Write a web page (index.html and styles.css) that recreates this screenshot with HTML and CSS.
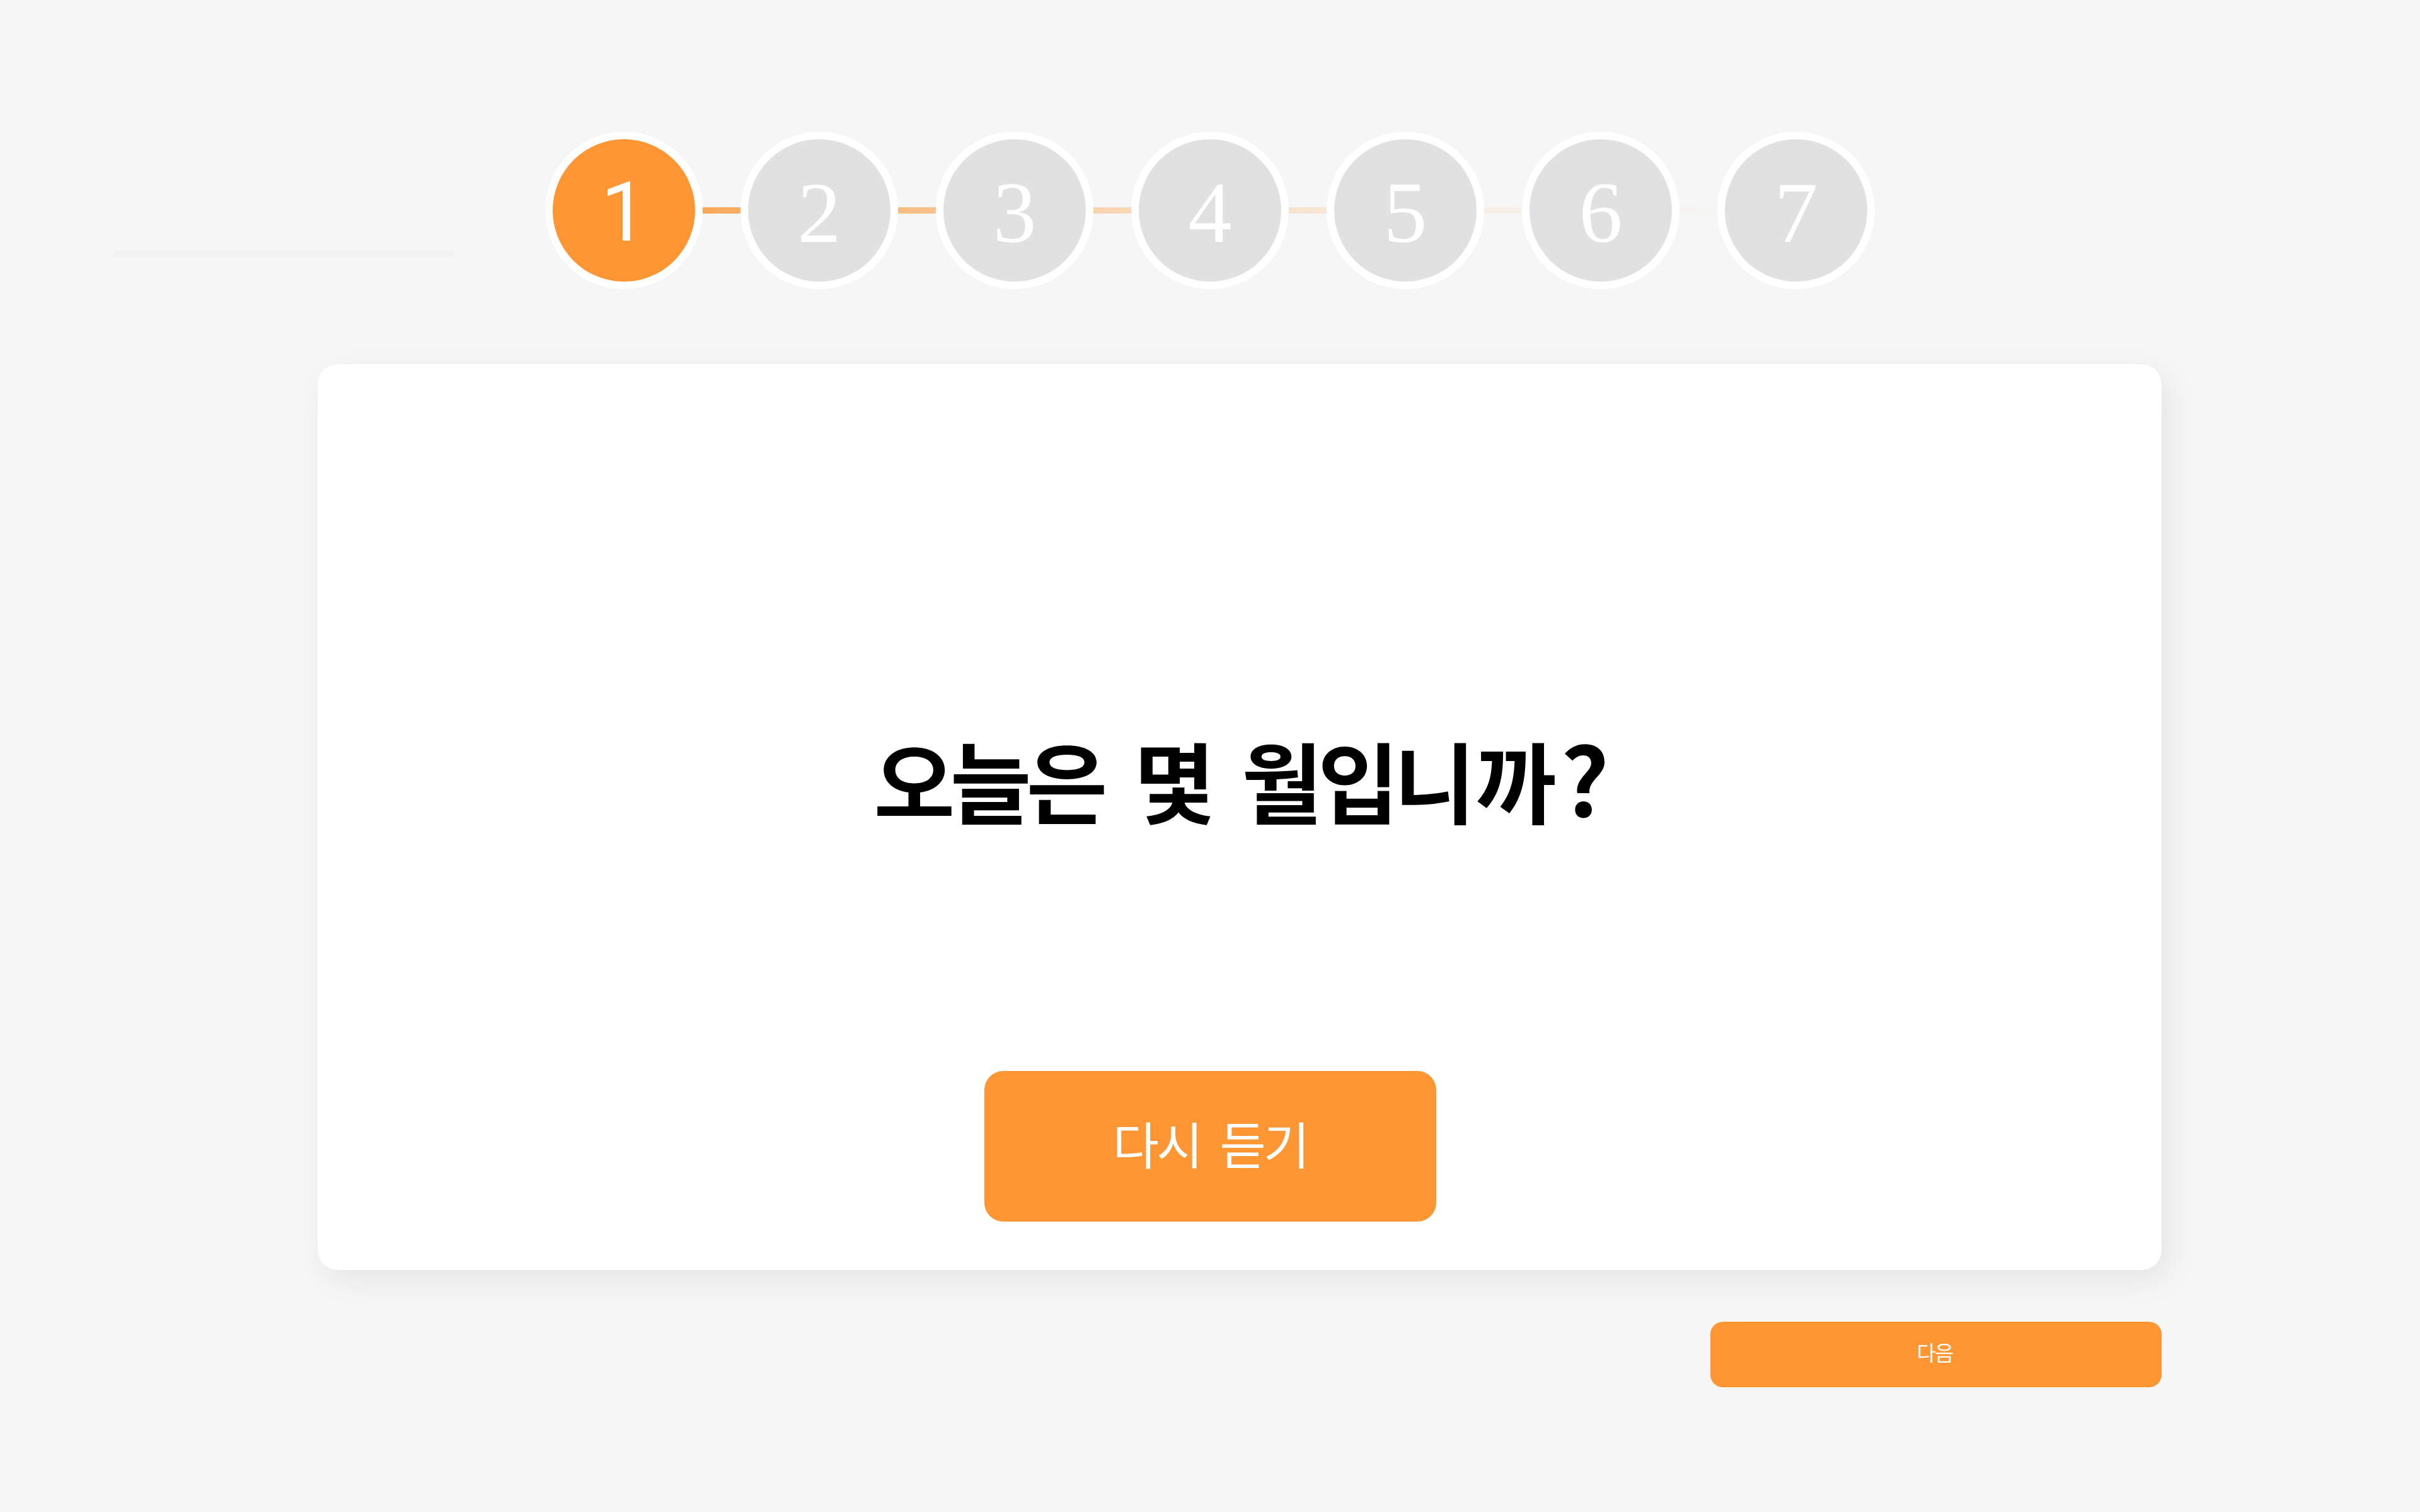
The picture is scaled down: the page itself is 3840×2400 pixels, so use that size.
FILE: index.html
```html
<!DOCTYPE html>
<html lang="ko">
<head>
<meta charset="utf-8">
<title>오늘은 몇 월입니까?</title>
<link rel="stylesheet" href="styles.css">
</head>
<body>
<header class="top">
  <div class="progress"></div>
  <div class="stepper">
    <div class="step active">1</div>
    <div class="link l1"></div>
    <div class="step">2</div>
    <div class="link l2"></div>
    <div class="step">3</div>
    <div class="link l3"></div>
    <div class="step">4</div>
    <div class="link l4"></div>
    <div class="step">5</div>
    <div class="link l5"></div>
    <div class="step">6</div>
    <div class="link l6"></div>
    <div class="step">7</div>
  </div>
</header>
<main class="main">
  <section class="card">
    <h1 class="question">오늘은 몇 월입니<span class="wide">까</span><span class="qmark">?</span></h1>
    <button class="replay" type="button">다시 듣기</button>
  </section>
  <button class="next" type="button">다음</button>
</main>
</body>
</html>
```

FILE: styles.css
```css
html, body {
  margin: 0;
  padding: 0;
}
body {
  background: #f6f6f6;
  width: 3840px;
  height: 2400px;
  font-family: "Noto Sans CJK KR", "Noto Sans", sans-serif;
  overflow: hidden;
}
.top {
  display: grid;
  grid-template-columns: 1fr auto 1fr;
  padding-top: 209px;
}
.progress {
  align-self: start;
  margin-top: 189px;
  margin-left: 179px;
  width: 541px;
  height: 10px;
  border-radius: 5px;
  background: #f2f2f2;
}
.stepper {
  display: flex;
  align-items: center;
}
.step {
  box-sizing: border-box;
  width: 250px;
  height: 250px;
  border: 12px solid #ffffff;
  border-radius: 50%;
  background: #e1e1e1;
  color: #ffffff;
  display: flex;
  align-items: center;
  justify-content: center;
  font-family: "Liberation Serif", serif;
  font-size: 138px;
  line-height: 1;
  padding-top: 8px;
}
.step.active {
  background: #ff9633;
  font-family: "Roboto", "Liberation Sans", sans-serif;
  font-weight: 400;
  font-size: 131px;
  padding-top: 6px;
}
.link {
  width: 60px;
  height: 10px;
}
.l1 { background: linear-gradient(90deg, rgba(255,150,51,0.82), rgba(255,150,51,0.74)); }
.l2 { background: linear-gradient(90deg, rgba(255,150,51,0.60), rgba(255,150,51,0.54)); }
.l3 { background: linear-gradient(90deg, rgba(255,150,51,0.37), rgba(255,150,51,0.31)); }
.l4 { background: linear-gradient(90deg, rgba(255,150,51,0.20), rgba(255,150,51,0.16)); }
.l5 { background: linear-gradient(90deg, rgba(255,150,51,0.08), rgba(255,150,51,0.06)); }
.l6 { background: linear-gradient(90deg, rgba(255,150,51,0.03), rgba(255,150,51,0.01)); }

.main {
  margin-top: 119px;
  margin-left: 504px;
  width: 2926px;
  display: flex;
  flex-direction: column;
}
.card {
  box-sizing: border-box;
  height: 1438px;
  background: #ffffff;
  border-radius: 32px;
  box-shadow: 12px 16px 50px rgba(0, 0, 0, 0.07);
  display: flex;
  flex-direction: column;
  align-items: center;
  padding-top: 588px;
}
.question {
  margin: 0 0 0 6px;
  height: 140px;
  font-size: 140px;
  line-height: 140px;
  font-weight: 700;
  letter-spacing: -0.055em;
  word-spacing: 18px;
  color: #000000;
  text-align: center;
  white-space: nowrap;
}
.wide {
  letter-spacing: 0;
  margin-left: 8px;
}
.qmark {
  font-size: 150px;
  line-height: 0;
  margin-left: 6px;
  letter-spacing: 0;
}
.replay {
  margin-top: 394px;
  margin-right: 94px;
  width: 717px;
  height: 239px;
  border: none;
  border-radius: 30px;
  background: #ff9633;
  color: #ffffff;
  font-family: "Noto Sans CJK KR", "Noto Sans", sans-serif;
  font-size: 80px;
  font-weight: 400;
  letter-spacing: -0.05em;
  word-spacing: 12px;
  padding: 0 0 14px 0;
}
.next {
  align-self: flex-end;
  margin-top: 82px;
  width: 716px;
  height: 104px;
  border: none;
  border-radius: 20px;
  background: #ff9633;
  color: #ffffff;
  font-family: "Noto Sans CJK KR", "Noto Sans", sans-serif;
  font-size: 33px;
  font-weight: 400;
  letter-spacing: -0.06em;
  padding: 0 4px 8px 0;
}
```
